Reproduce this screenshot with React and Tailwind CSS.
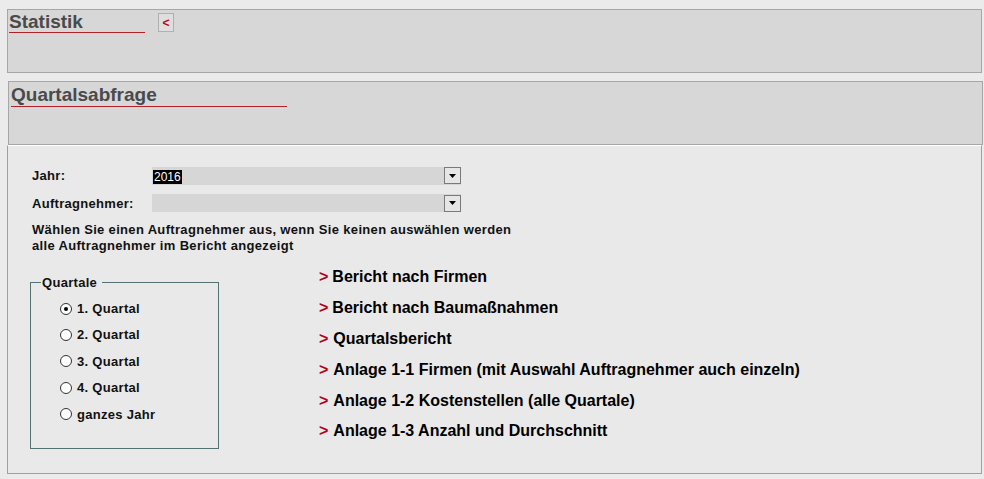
import React from "react";

const font = { fontFamily: '"Liberation Sans", Arial, sans-serif' };

function Select({ value }) {
  return (
    <div className="flex h-[18px] w-[309px] items-center bg-[#d6d6d6]">
      <div className="flex-1 pl-[1px]">
        {value && (
          <span className="bg-black px-[1px] text-[12px] leading-[14px] font-normal text-white">{value}</span>
        )}
      </div>
      <div className="flex h-[17px] w-[17px] items-center justify-center border border-[#7a7a7a] bg-[#e6e6e6]">
        <svg width="7" height="4" viewBox="0 0 7 4">
          <path d="M0 0 L7 0 L3.5 4 Z" fill="#000" />
        </svg>
      </div>
    </div>
  );
}

function Radio({ checked, label }) {
  return (
    <div className="flex h-[26.4px] items-center">
      <div className="flex h-[12px] w-[12px] items-center justify-center rounded-full border border-[#333] bg-white">
        {checked && <div className="h-[4px] w-[4px] rounded-full bg-black" />}
      </div>
      <span className="ml-[5px] text-[13px] font-bold tracking-[0.3px] text-[#111]">{label}</span>
    </div>
  );
}

function LinkRow({ text, wide }) {
  return (
    <div className="flex h-[30.8px] items-center text-[16px] font-bold text-black">
      <span className="text-[#b3001b]">&gt;</span>
      <span className={wide ? "ml-[5px]" : "ml-[4px]"}>{text}</span>
    </div>
  );
}

export default function App() {
  return (
    <div style={font} className="h-[479px] w-[984px] overflow-hidden bg-[#ebebeb] pt-[9px]">
      {/* Statistik */}
      <div className="ml-[7px] h-[64px] w-[975px] border border-[#a6a6a6] bg-[#d7d7d7]">
        <div className="flex items-start">
          <div className="ml-[1px] mt-[1px] w-[136px]">
            <div className="text-[19px] leading-[21px] font-bold text-[#4a4a4a]">Statistik</div>
            <div className="h-[1px] w-[136px] bg-[#b3202a]" />
          </div>
          <div className="ml-[13px] mt-[3px] flex h-[19px] w-[16px] items-center justify-center border border-[#b0b0b0] bg-[#dedede] text-[12px] font-bold text-[#c0001a]">
            &lt;
          </div>
        </div>
      </div>

      {/* Quartalsabfrage */}
      <div className="ml-[8px] mt-[8px] h-[64px] w-[975px] border border-[#a6a6a6] bg-[#d7d7d7]">
        <div className="ml-[2px] mt-[2px] w-[276px]">
          <div className="text-[19px] leading-[22px] font-bold text-[#4a4a4a]">Quartalsabfrage</div>
          <div className="h-[1px] w-[276px] bg-[#b3202a]" />
        </div>
      </div>

      {/* Content */}
      <div className="ml-[7px] h-[329px] w-[975px] border border-[#a0a0a0] border-t-white bg-[#e9e9e9] pl-[24px] pt-[20px]">
        <div className="flex items-center">
          <div className="w-[120px] text-[13px] font-bold tracking-[0.3px] text-[#111]">Jahr:</div>
          <Select value="2016" />
        </div>
        <div className="mt-[8px] flex items-center">
          <div className="w-[120px] text-[13px] font-bold tracking-[0.3px] text-[#111]">Auftragnehmer:</div>
          <Select />
        </div>
        <div className="mt-[9px] text-[13px] leading-[16px] font-bold tracking-[0.33px] text-[#111]">
          Wählen Sie einen Auftragnehmer aus, wenn Sie keinen auswählen werden
          <br />
          alle Auftragnehmer im Bericht angezeigt
        </div>

        <div className="mt-[8px] flex">
          <fieldset className="ml-[-2px] mt-[11px] h-[176px] w-[189px] border border-[#557272] pl-[29px] pt-[3px]">
            <legend className="ml-[-19px] px-[1px] text-[13px] font-bold tracking-[0.3px] text-[#111]">
              Quartale&nbsp;
            </legend>
            <Radio checked label="1. Quartal" />
            <Radio label="2. Quartal" />
            <Radio label="3. Quartal" />
            <Radio label="4. Quartal" />
            <Radio label="ganzes Jahr" />
          </fieldset>

          <div className="ml-[100px]">
            <LinkRow text="Bericht nach Firmen" />
            <LinkRow text="Bericht nach Baumaßnahmen" />
            <LinkRow text="Quartalsbericht" wide />
            <LinkRow text="Anlage 1-1 Firmen (mit Auswahl Auftragnehmer auch einzeln)" wide />
            <LinkRow text="Anlage 1-2 Kostenstellen (alle Quartale)" wide />
            <LinkRow text="Anlage 1-3 Anzahl und Durchschnitt" wide />
          </div>
        </div>
      </div>
    </div>
  );
}
